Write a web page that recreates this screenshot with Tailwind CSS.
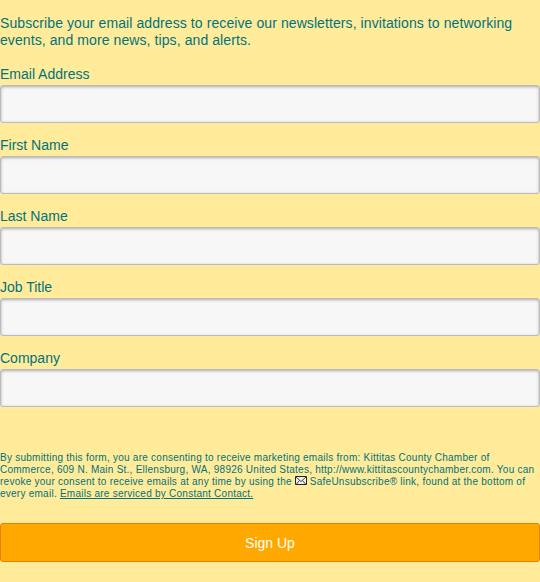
<!DOCTYPE html>
<html lang="en"><head><meta charset="utf-8"><title>Newsletter sign up</title>
<script src="https://cdn.jsdelivr.net/npm/@tailwindcss/browser@4"></script></head>
<body class="bg-[#ffeb99] text-[#00737d] font-['Liberation_Sans',Arial,sans-serif] text-[14px] leading-[17px] overflow-hidden">
<form class="flex flex-col pt-[15px]">
<p class="mb-[17px] tracking-[0.088px]">Subscribe your email address to receive our newsletters, invitations to networking<br>events, and more news, tips, and alerts.</p>
<div class="flex flex-col gap-[14px]">
<label class="block">Email Address<input class="mt-[2px] block h-[38px] w-full rounded-[3px] border border-[#bbb] bg-[#f7f7f7] shadow-[inset_0_1px_3px_#aaa]"></label>
<label class="block">First Name<input class="mt-[2px] block h-[38px] w-full rounded-[3px] border border-[#bbb] bg-[#f7f7f7] shadow-[inset_0_1px_3px_#aaa]"></label>
<label class="block">Last Name<input class="mt-[2px] block h-[38px] w-full rounded-[3px] border border-[#bbb] bg-[#f7f7f7] shadow-[inset_0_1px_3px_#aaa]"></label>
<label class="block">Job Title<input class="mt-[2px] block h-[38px] w-full rounded-[3px] border border-[#bbb] bg-[#f7f7f7] shadow-[inset_0_1px_3px_#aaa]"></label>
<label class="block">Company<input class="mt-[2px] block h-[38px] w-full rounded-[3px] border border-[#bbb] bg-[#f7f7f7] shadow-[inset_0_1px_3px_#aaa]"></label>
</div>
<p class="mt-[45px] text-[10px] leading-[12px] tracking-[0.250px] whitespace-nowrap">By submitting this form, you are consenting to receive marketing emails from: Kittitas County Chamber of<br>Commerce, 609 N. Main St., Ellensburg, WA, 98926 United States, http://www.kittitascountychamber.com. You can<br>revoke your consent to receive emails at any time by using the <svg class="inline-block h-[9px] w-[12px] align-baseline" viewBox="0 0 12 9"><path d="M.5.5h11v8H.5z" fill="#eee" stroke="#222"/><path d="M1 1l5 4.500L11 1M1.500 8l3-3.500M10.500 8l-3-3.500" fill="none" stroke="#333" stroke-width=".9"/></svg> SafeUnsubscribe® link, found at the bottom of<br>every email. <a class="underline" href="#">Emails are serviced by Constant Contact.</a></p>
<button type="button" class="mt-[23px] h-[39px] w-full rounded-[3px] border border-[#e38200] bg-[#ffa800] pt-[2px] text-white">Sign Up</button>
</form></body></html>
